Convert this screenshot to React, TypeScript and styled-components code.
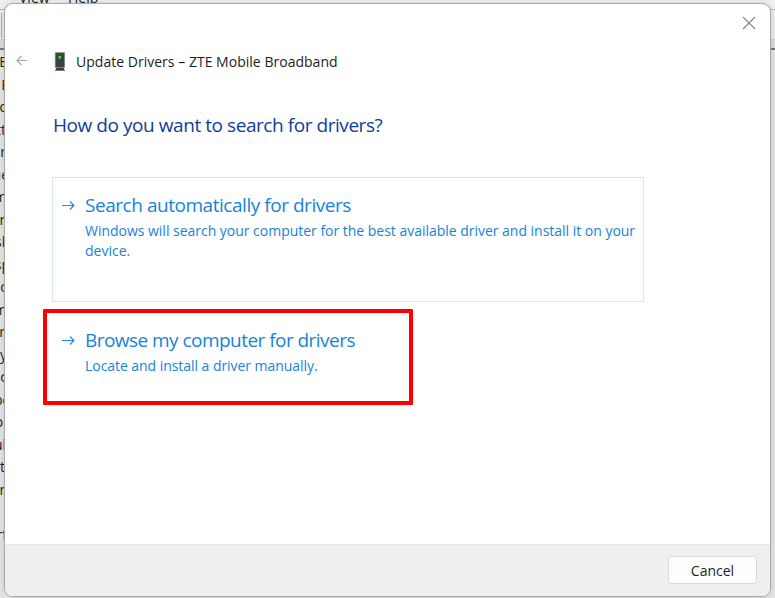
import React from "react";
import styled, { createGlobalStyle } from "styled-components";

const GlobalStyle = createGlobalStyle`
  * { box-sizing: border-box; }
  body { margin: 0; overflow: hidden; }
  button { font: inherit; }
`;

const Desktop = styled.div`
  position: relative;
  width: 775px;
  height: 598px;
  overflow: hidden;
  background: #e4e5e5;
  color: #1d1d1d;
  font-family: "Open Sans", "Noto Sans", sans-serif;
`;

const MenuBar = styled.div`
  display: flex;
  gap: 20px;
  height: 10px;
  padding-left: 19px;
  overflow: hidden;
  background: #f0f0f0;
  border-bottom: 1px solid #b9b9b9;
`;

const MenuItem = styled.span<{ $width: number }>`
  width: ${(p) => p.$width}px;
  font-size: 14px;
  line-height: 20px;
  margin-top: -12px;
  white-space: nowrap;
`;

const ToolStrip = styled.div`
  height: 30px;
  background: #ececec;
  border-left: 1px solid #ececec;
  border-bottom: 1px solid #cfcfcf;
  &::before {
    content: "";
    display: block;
    width: 1px;
    height: 25px;
    transform: translate(0, 3px);
    background: #b0b0b0;
  }
`;

const Divider = styled.div`
  height: 10px;
  background: #dcdcdc;
  border-bottom: 2px solid #777;
`;

const Tree = styled.div`
  display: flex;
  flex-direction: column;
  width: 5px;
  padding-top: 1px;
`;

const TreeRow = styled.div<{ $clip: number }>`
  display: flex;
  justify-content: flex-end;
  height: 22.5px;
  overflow: hidden;
  font-size: 14px;
  line-height: 22px;
  & > span { margin-right: ${(p) => -p.$clip}px; }
`;

const Dialog = styled.section`
  position: absolute;
  left: 4px;
  top: 3px;
  width: 767px;
  height: 594px;
  display: flex;
  flex-direction: column;
  overflow: hidden;
  background: #fff;
  border: 1px solid #a9a9a9;
  border-radius: 9px;
  box-shadow: 0 0 7px rgba(0, 0, 0, 0.14);
`;

const TitleBar = styled.div`
  display: flex;
  align-items: flex-start;
  justify-content: flex-end;
  height: 38px;
  padding: 12px 14px 0 0;
`;

const PlainButton = styled.button`
  display: block;
  padding: 0;
  border: 0;
  background: none;
  svg { display: block; }
`;

const Header = styled.header`
  display: flex;
  align-items: center;
  height: 38px;
  padding-left: 11px;
`;

const DeviceIcon = styled.svg`
  margin: 0 10px 0 27px;
  transform: translateY(1px);
`;

const Line = styled.span<{ $size: number; $spacing?: number }>`
  display: block;
  white-space: nowrap;
  font-size: ${(p) => p.$size}px;
  letter-spacing: ${(p) => p.$spacing ?? 0}px;
`;

const Heading = styled.h1`
  height: 93px;
  margin: 0;
  padding: 27px 0 0 48px;
  color: #103c9c;
  font-weight: 400;
  line-height: 36px;
`;

const Options = styled.div`
  display: flex;
  flex-direction: column;
  gap: 6.5px;
  flex: 1;
  padding: 4px 0 0 38px;
`;

const CommandLink = styled.button<{ $highlighted?: boolean }>`
  display: flex;
  align-items: flex-start;
  width: ${(p) => (p.$highlighted ? 370 : 592)}px;
  height: ${(p) => (p.$highlighted ? 96 : 125)}px;
  margin-left: ${(p) => (p.$highlighted ? -0.4 : 9)}px;
  padding: ${(p) => (p.$highlighted ? "11.5px 0 0 15.4px" : "11px 0 0 9px")};
  border: ${(p) => (p.$highlighted ? "4px solid #fe0000" : "1px solid #d5e8f7")};
  border-radius: ${(p) => (p.$highlighted ? 1 : 0)}px;
  background: none;
  color: #1683da;
  text-align: left;
`;

const LinkArrow = styled.svg`
  flex: none;
  margin: 11px 10px 0 0;
`;

const LinkTitle = styled.div`
  line-height: 32px;
`;

const LinkDetail = styled.div`
  line-height: 20px;
`;

const Footer = styled.footer`
  display: flex;
  justify-content: flex-end;
  height: 52px;
  padding: 11px 13px 0 0;
  background: #efefef;
  border-top: 1px solid #e6e6e6;
`;

const CancelButton = styled.button`
  display: flex;
  align-items: center;
  justify-content: center;
  width: 89px;
  height: 28px;
  padding: 0;
  border: 1px solid #dadada;
  border-radius: 3px;
  background: #fdfdfd;
  color: #1d1d1d;
`;

const treeRows: { text: string; clip: number }[] = [
  { text: "E", clip: 2 },
  { text: "E", clip: 4 },
  { text: "d", clip: 3 },
  { text: "tt", clip: 1 },
  { text: "or", clip: 1 },
  { text: "ue", clip: 4 },
  { text: "m", clip: 2 },
  { text: "n", clip: 3 },
  { text: "sk", clip: 4 },
  { text: "sp", clip: 5 },
  { text: "c", clip: 2 },
  { text: "m", clip: 2 },
  { text: "r", clip: 0 },
  { text: "y", clip: 2 },
  { text: "c", clip: 2 },
  { text: "po", clip: 6 },
  { text: "or", clip: 4 },
  { text: "ul", clip: 1 },
  { text: "t", clip: 0 },
  { text: "n", clip: 3 },
  { text: "", clip: 0 },
  { text: "rf", clip: 2 },
];

function Arrow() {
  return (
    <LinkArrow width="13" height="11" viewBox="0 0 13 11" fill="none" stroke="#2589dc" strokeWidth="1.1">
      <path d="M0 5.5H12M8 1.5L12 5.5L8 9.5" />
    </LinkArrow>
  );
}

export default function App() {
  return (
    <Desktop>
      <GlobalStyle />
      <MenuBar>
        <MenuItem $width={29}>View</MenuItem>
        <MenuItem $width={30}>Help</MenuItem>
      </MenuBar>
      <ToolStrip />
      <Divider />
      <Tree>
        {treeRows.map((row, i) => (
          <TreeRow key={i} $clip={row.clip}><span>{row.text}</span></TreeRow>
        ))}
      </Tree>
      <Dialog>
        <TitleBar>
          <PlainButton aria-label="Close">
            <svg width="14" height="14" viewBox="0 0 14 14" fill="none" stroke="#858585" strokeWidth="1.1">
              <path d="M1 1L13 13M13 1L1 13" />
            </svg>
          </PlainButton>
        </TitleBar>
        <Header>
          <PlainButton aria-label="Back">
            <svg width="11" height="12" viewBox="0 0 11 12" fill="none" stroke="#a8a8a8" strokeWidth="1.2">
              <path d="M11 5.5H1M5.5 1L1 5.5L5.5 10" />
            </svg>
          </PlainButton>
          <DeviceIcon width="12" height="20" viewBox="0 0 12 20">
            <path d="M1.3 .7H10.5V15.5H1.3Z" fill="#3e4144" stroke="#777d82" strokeWidth=".8" />
            <path d="M2.5 16H9.5L11 19H1Z" fill="#35383b" />
            <path d="M1 18.5H11" stroke="#777d82" />
            <rect x="4.5" y="4" width="2.6" height="2.6" fill="#31e83d" />
          </DeviceIcon>
          <Line $size={14} $spacing={0.02}>Update Drivers – ZTE Mobile Broadband</Line>
        </Header>
        <Heading><Line $size={19} $spacing={-0.44}>How do you want to search for drivers?</Line></Heading>
        <Options>
          <CommandLink>
            <Arrow />
            <div>
              <LinkTitle><Line $size={19} $spacing={-0.46}>Search automatically for drivers</Line></LinkTitle>
              <LinkDetail>
                <Line $size={14} $spacing={-0.02}>Windows will search your computer for the best available driver and install it on your</Line>
                <Line $size={14}>device.</Line>
              </LinkDetail>
            </div>
          </CommandLink>
          <CommandLink $highlighted>
            <Arrow />
            <div>
              <LinkTitle><Line $size={19} $spacing={-0.54}>Browse my computer for drivers</Line></LinkTitle>
              <LinkDetail><Line $size={14} $spacing={-0.05}>Locate and install a driver manually.</Line></LinkDetail>
            </div>
          </CommandLink>
        </Options>
        <Footer>
          <CancelButton><Line $size={14}>Cancel</Line></CancelButton>
        </Footer>
      </Dialog>
    </Desktop>
  );
}
